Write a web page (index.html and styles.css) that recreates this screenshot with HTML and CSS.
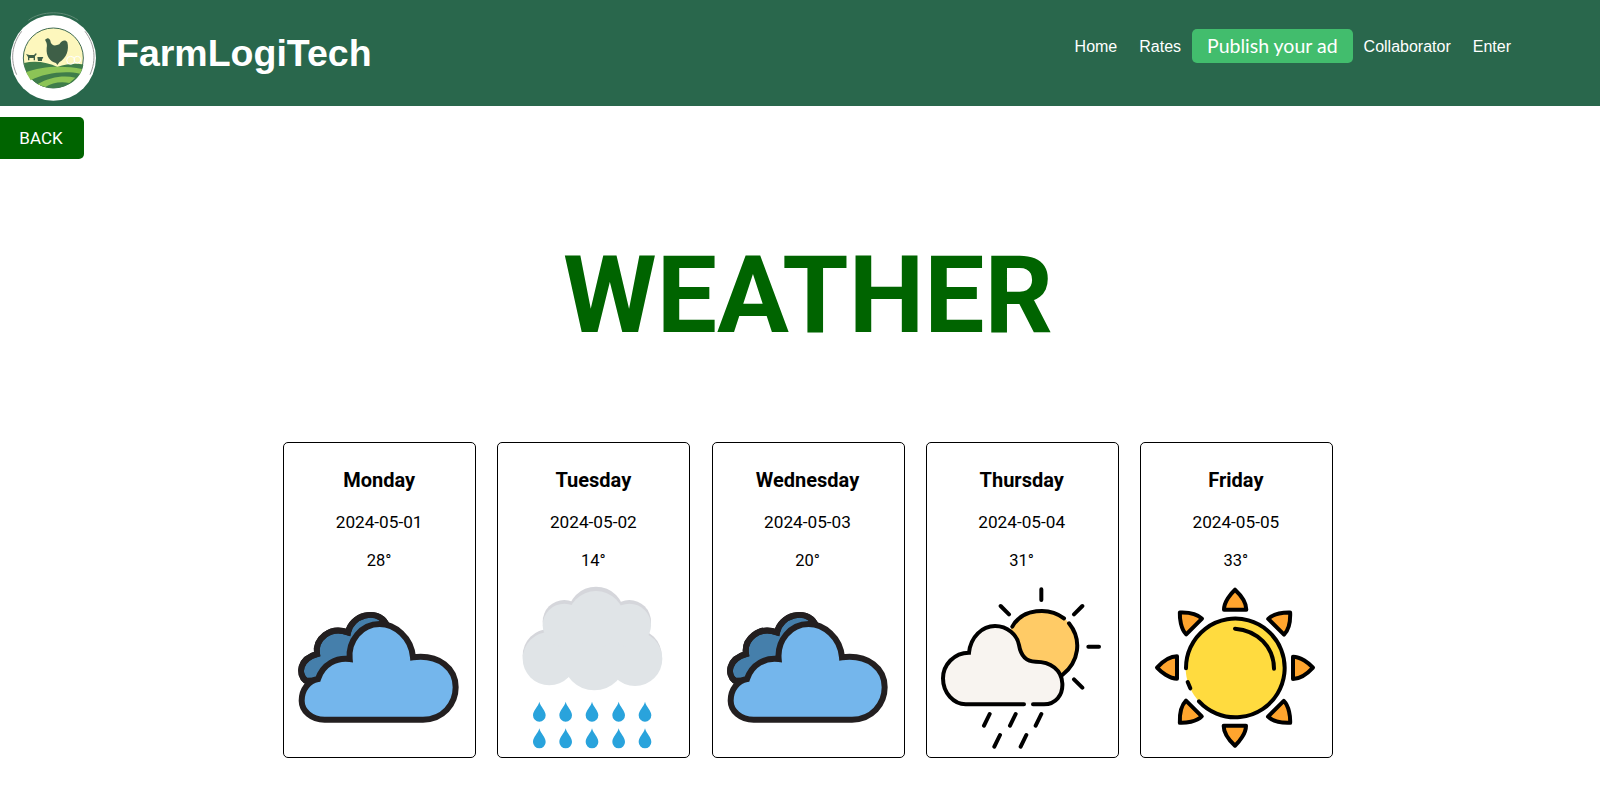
FILE: index.html
```html
<!DOCTYPE html>
<html lang="en">
<head>
    <title>FarmLogiTech - Weather</title>
    <link rel="stylesheet" href="styles.css">
</head>
<body>
    <svg class="defs" width="0" height="0">
        <defs>
            <path id="drop" d="M0,0 C4,16 19,26 19,41 A19,19 0 0 1 -19,41 C-19,26 -4,16 0,0 Z"/>
            <path id="ray" d="M915,88 C915,65 935,40 948,28 C961,40 982,65 982,88 Z"/>
            <g id="blue-cloud">
                <path fill="#457fab" d="M78,305 C54,285 59,240 112,225 C105,180 150,140 205,160 C215,110 290,85 320,135 L300,300 Z"/>
                <path fill="none" d="M78,305 C54,285 59,240 112,225 C105,180 150,140 205,160 C215,110 290,85 320,135"/>
                <path fill="#74b6ec" d="M135,422 H430 C490,422 528,375 528,325 C528,270 480,225 400,235 C395,175 345,135 300,135 C245,135 205,185 210,240 C170,235 130,255 115,300 C88,305 66,330 66,365 C66,395 95,422 135,422 Z"/>
            </g>
        </defs>
    </svg>

    <header class="topbar">
        <svg class="logo" viewBox="24 21 270 270">
            <path d="M85,52 C125,22 195,22 235,52" fill="none" stroke="#5f8a75" stroke-width="3"/>
            <circle cx="160" cy="165" r="128" fill="#fff"/>
            <path d="M50,215 C30,170 35,125 65,85 M270,215 C290,170 285,125 255,85" fill="none" stroke="#9a9a9a" stroke-width="3"/>
            <circle cx="160" cy="165" r="90" fill="#fdf7bd" stroke="#3f6b52" stroke-width="3"/>
            <path d="M72,180 C105,172 145,178 172,192 C200,182 232,180 250,185 C245,225 205,255 160,255 C115,255 78,225 72,180 Z" fill="#3f7d4a"/>
            <path d="M78,208 C120,190 190,186 246,198 L240,212 C190,202 130,212 92,232 Z" fill="#8cc456"/>
            <path d="M112,244 C150,222 190,216 226,224 L208,240 C180,235 155,240 136,252 Z" fill="#8cc456"/>
            <path d="M135,110 L142,106 C148,106 152,112 152,118 C155,128 165,130 178,124 C184,114 196,108 202,118 C208,140 200,165 178,178 L172,186 L168,180 C150,176 138,160 140,135 C142,125 140,120 138,116 Z" fill="#3e5f47"/>
            <path d="M78,153 L88,156 H102 L108,150 L110,154 L105,160 V172 H101 V165 H88 V172 H84 V162 Z M112,162 H130 L126,170 V174 H114 Z" fill="#3e5f47"/>
            <circle cx="212" cy="172" r="12" fill="none" stroke="#fff" stroke-width="3"/>
            <circle cx="232" cy="170" r="10" fill="none" stroke="#fff" stroke-width="3"/>
        </svg>
        <h1 class="brand">FarmLogiTech</h1>
        <nav class="nav">
            <a class="nav-link" href="#">Home</a>
            <a class="nav-link" href="#">Rates</a>
            <a class="nav-button" href="#">Publish your ad</a>
            <a class="nav-link" href="#">Collaborator</a>
            <a class="nav-link" href="#">Enter</a>
        </nav>
    </header>

    <button class="back-button">BACK</button>

    <main class="content">
        <h2 class="page-title">WEATHER</h2>
        <div class="cards">
            <div class="card">
                <h3 class="day">Monday</h3>
                <p class="date">2024-05-01</p>
                <p class="temp">28°</p>
                <svg class="icon" viewBox="58 24 480 480" stroke="#231f20" stroke-width="18">
                    <use href="#blue-cloud"/>
                </svg>
            </div>
            <div class="card">
                <h3 class="day">Tuesday</h3>
                <p class="date">2024-05-02</p>
                <p class="temp">14°</p>
                <svg class="icon" viewBox="701 21 480 480">
                    <g fill="#d5d6db">
                        <circle cx="810" cy="227" r="80"/>
                        <circle cx="950" cy="105" r="85"/>
                        <circle cx="855" cy="125" r="65"/>
                        <circle cx="1050" cy="125" r="65"/>
                        <circle cx="1067" cy="227" r="80"/>
                    </g>
                    <g fill="#e0e4e7">
                        <circle cx="810" cy="236" r="80"/>
                        <circle cx="945" cy="236" r="95"/>
                        <circle cx="1067" cy="236" r="82"/>
                        <circle cx="950" cy="118" r="85"/>
                        <circle cx="855" cy="136" r="65"/>
                        <circle cx="1050" cy="136" r="65"/>
                    </g>
                    <g fill="#29a3dc">
                        <use href="#drop" x="780" y="365"/>
                        <use href="#drop" x="859" y="365"/>
                        <use href="#drop" x="938" y="365"/>
                        <use href="#drop" x="1018" y="365"/>
                        <use href="#drop" x="1097" y="365"/>
                        <use href="#drop" x="780" y="445"/>
                        <use href="#drop" x="859" y="445"/>
                        <use href="#drop" x="938" y="445"/>
                        <use href="#drop" x="1018" y="445"/>
                        <use href="#drop" x="1097" y="445"/>
                    </g>
                </svg>
            </div>
            <div class="card">
                <h3 class="day">Wednesday</h3>
                <p class="date">2024-05-03</p>
                <p class="temp">20°</p>
                <svg class="icon" viewBox="58 24 480 480" stroke="#231f20" stroke-width="18">
                    <use href="#blue-cloud"/>
                </svg>
            </div>
            <div class="card">
                <h3 class="day">Thursday</h3>
                <p class="date">2024-05-04</p>
                <p class="temp">31°</p>
                <svg class="icon" viewBox="69 21 480 480" fill="none" stroke="#000" stroke-width="12" stroke-linecap="round">
                    <circle cx="368" cy="195" r="105" fill="#ffcb66" stroke="none"/>
                    <path d="M280,140 C310,85 390,80 435,115 M450,130 C490,180 480,245 430,285"/>
                    <path d="M367,28 V60 M245,78 L270,103 M490,78 L465,103 M508,200 H540 M465,298 L490,323"/>
                    <path fill="#f8f4f0" stroke="none" d="M140,373 H375 C410,373 432,345 430,310 C428,270 395,245 350,245 C320,245 305,225 300,195 C295,165 265,138 228,138 C190,138 155,170 150,218 C105,218 72,255 72,295 C72,340 105,373 140,373 Z"/>
                    <path d="M315,373 H140 C105,373 72,340 72,295 C72,255 105,218 150,218 C155,170 190,138 228,138 C265,138 295,165 300,195 C305,225 320,245 350,245 C395,245 428,270 430,310 C432,345 410,373 375,373 H342"/>
                    <path d="M212,402 L195,437 M290,402 L273,437 M367,402 L350,437 M243,465 L226,500 M322,465 L305,500"/>
                </svg>
            </div>
            <div class="card">
                <h3 class="day">Friday</h3>
                <p class="date">2024-05-05</p>
                <p class="temp">33°</p>
                <svg class="icon" viewBox="711 20 480 480" fill="none" stroke="#000" stroke-width="12" stroke-linecap="round" stroke-linejoin="round">
                    <g fill="#ffa52e">
                        <use href="#ray"/>
                        <use href="#ray" transform="rotate(45 948 262)"/>
                        <use href="#ray" transform="rotate(90 948 262)"/>
                        <use href="#ray" transform="rotate(135 948 262)"/>
                        <use href="#ray" transform="rotate(180 948 262)"/>
                        <use href="#ray" transform="rotate(225 948 262)"/>
                        <use href="#ray" transform="rotate(270 948 262)"/>
                        <use href="#ray" transform="rotate(315 948 262)"/>
                    </g>
                    <circle cx="948" cy="262" r="148" fill="#ffdb3f" stroke="none"/>
                    <path d="M840,363 A148,148 0 1 0 801,264"/>
                    <path d="M806,305 L814,324"/>
                    <path d="M948,145 C1015,150 1065,200 1065,265"/>
                </svg>
            </div>
        </div>
    </main>
</body>
</html>
```

FILE: styles.css
```css
body {
    margin: 0;
    font-family: Roboto, sans-serif;
    background-color: #fff;
    color: #000;
}

.defs {
    position: absolute;
}

.topbar {
    display: flex;
    align-items: center;
    height: 106px;
    padding: 0 78px 0 8px;
    background-color: #29674c;
}

.logo {
    width: 90px;
    height: 90px;
    margin-top: 4px;
    overflow: visible;
}

.brand {
    margin: 0 0 0 18px;
    font-family: "Liberation Sans", Arial, sans-serif;
    font-size: 37.5px;
    font-weight: bold;
    color: #fff;
}

.nav {
    display: flex;
    align-items: center;
    margin-left: auto;
    margin-bottom: 14px;
    font-family: "Liberation Sans", Arial, sans-serif;
    font-size: 16px;
}

.nav-link {
    padding: 2px 11px 0;
    color: #fff;
    text-decoration: none;
}

.nav-button {
    padding: 5px 15px;
    background-color: #42bd6d;
    border-radius: 5px;
    color: #fff;
    font-family: Lato, sans-serif;
    font-size: 19.5px;
    line-height: 24px;
    text-decoration: none;
}

.back-button {
    display: block;
    width: 84px;
    height: 42px;
    margin-top: 11px;
    padding: 0 2px 0 0;
    border: none;
    border-radius: 0 5px 5px 0;
    background-color: #006400;
    color: #fff;
    font-family: Roboto, sans-serif;
    font-size: 17px;
}

.content {
    padding-left: 16px;
}

.page-title {
    margin: 71px 0 80px;
    text-align: center;
    font-size: 107px;
    line-height: 132px;
    font-weight: bold;
    color: #006400;
}

.cards {
    display: flex;
    justify-content: center;
    gap: 21.2px;
}

.card {
    box-sizing: border-box;
    width: 193px;
    height: 316px;
    padding-right: 1px;
    border: 1px solid #000;
    border-radius: 5px;
    text-align: center;
}

.day {
    margin: 25px 0 0;
    font-size: 20px;
    line-height: 24px;
    font-weight: bold;
}

.date {
    margin: 21px 0 0;
    font-size: 17.2px;
    line-height: 19px;
}

.temp {
    margin: 19px 0 0;
    font-size: 16.5px;
    line-height: 19px;
}

.icon {
    display: block;
    width: 160px;
    height: 160px;
    margin: 17px auto 0;
    overflow: visible;
}
```
